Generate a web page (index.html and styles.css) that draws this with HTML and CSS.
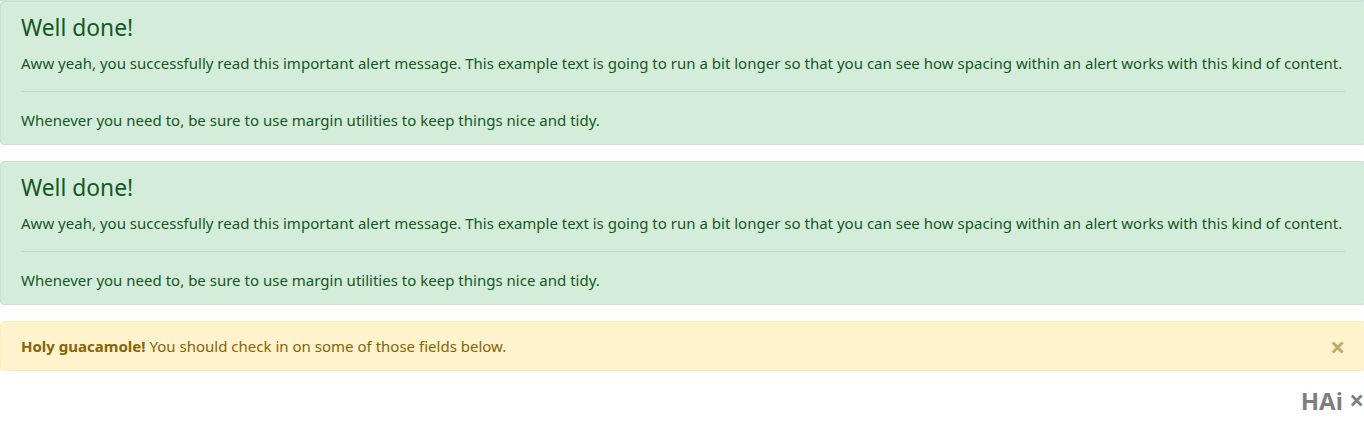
FILE: index.html
```html
<!DOCTYPE html>
<html lang="en">
<head>
<meta charset="utf-8">
<title>Alerts</title>
<link rel="stylesheet" href="styles.css">
</head>
<body>
<div class="topbar"></div>
<div class="page">
  <div class="alert alert-success">
    <h4 class="alert-heading">Well done!</h4>
    <p>Aww yeah, you successfully read this important alert message. This example text is going to run a bit longer so that you can see how spacing within an alert works with this kind of content.</p>
    <hr>
    <p class="mb-0">Whenever you need to, be sure to use margin utilities to keep things nice and tidy.</p>
  </div>
  <div class="alert alert-success">
    <h4 class="alert-heading">Well done!</h4>
    <p>Aww yeah, you successfully read this important alert message. This example text is going to run a bit longer so that you can see how spacing within an alert works with this kind of content.</p>
    <hr>
    <p class="mb-0">Whenever you need to, be sure to use margin utilities to keep things nice and tidy.</p>
  </div>
  <div class="alert alert-warning">
    <strong>Holy guacamole!</strong> You should check in on some of those fields below.
    <button class="close" type="button" aria-label="Close"><span aria-hidden="true">&times;</span></button>
  </div>
  <div class="extra">
    <button class="close-plain" type="button">HAi <span aria-hidden="true">&times;</span></button>
  </div>
</div>
</body>
</html>
```
FILE: styles.css
```css
html { overflow-x: hidden; }
body {
  margin: 0;
  font-family: "Noto Sans", "Open Sans", sans-serif;
  font-size: 15px;
  letter-spacing: 0.01px;
  line-height: 24px;
  color: #212529;
  background: #fff;
}
.topbar {
  height: 1px;
  background: #dcdcdc;
}
.page {
  width: 1366px;
}
.alert {
  position: relative;
  padding: 12px 20px;
  margin-bottom: 16px;
  border: 1px solid transparent;
  border-radius: 4px;
}
.alert p {
  margin: 0 0 16px;
  white-space: nowrap;
}
.alert p.mb-0 { margin-bottom: 0; }
.alert-heading {
  margin: 0 0 8px;
  font-size: 22.8px;
  font-weight: 400;
  line-height: 28.8px;
  letter-spacing: 0;
}
.alert hr {
  margin: 16px 0;
  border: 0;
  border-top: 1px solid #b1dfbb;
  height: 0;
}
.alert-success {
  color: #155724;
  background: #d4edda;
  border-color: #c3e6cb;
}
.alert-warning {
  color: #856404;
  background: #fff3cd;
  border-color: #ffeeba;
  padding-right: 64px;
}
.alert-warning strong { font-weight: 700; }
.close {
  position: absolute;
  top: 0;
  right: 0;
  padding: 12px 20px;
  background: transparent;
  border: 0;
  font-family: inherit;
  font-size: 26px;
  font-weight: 700;
  line-height: 1;
  color: inherit;
  opacity: .5;
  cursor: pointer;
}
.extra {
  display: flex;
  justify-content: flex-end;
  padding-right: 2px;
}
.close-plain {
  background: transparent;
  border: 0;
  padding: 0;
  font-family: inherit;
  font-size: 24px;
  font-weight: 700;
  line-height: 1;
  color: #000;
  opacity: .5;
}
.close-plain span { font-size: 26px; }
```
